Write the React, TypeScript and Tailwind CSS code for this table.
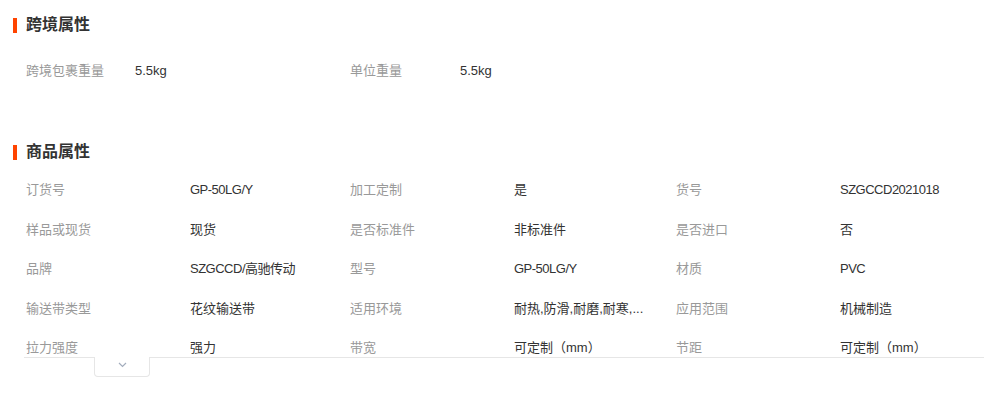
const font = { fontFamily: '"Liberation Sans", "Noto Sans CJK SC", sans-serif' };

type Attr = { label: string; value: string };

const cross: Attr[] = [
  { label: '跨境包裹重量', value: '5.5kg' },
  { label: '单位重量', value: '5.5kg' },
];

const attrs: Attr[][] = [
  [
    { label: '订货号', value: 'GP-50LG/Y' },
    { label: '加工定制', value: '是' },
    { label: '货号', value: 'SZGCCD2021018' },
  ],
  [
    { label: '样品或现货', value: '现货' },
    { label: '是否标准件', value: '非标准件' },
    { label: '是否进口', value: '否' },
  ],
  [
    { label: '品牌', value: 'SZGCCD/高驰传动' },
    { label: '型号', value: 'GP-50LG/Y' },
    { label: '材质', value: 'PVC' },
  ],
  [
    { label: '输送带类型', value: '花纹输送带' },
    { label: '适用环境', value: '耐热,防滑,耐磨,耐寒,...' },
    { label: '应用范围', value: '机械制造' },
  ],
  [
    { label: '拉力强度', value: '强力' },
    { label: '带宽', value: '可定制（mm）' },
    { label: '节距', value: '可定制（mm）' },
  ],
];

const colWidths = ['w-[324px]', 'w-[326px]', 'flex-1'];

function Title({ text }: { text: string }) {
  return (
    <div className="flex items-center h-[24px] pl-[13px]">
      <span className="w-[4px] h-[15px] bg-[#ff4400]" />
      <span className="ml-[9px] text-[16px] font-bold text-[#333]">{text}</span>
    </div>
  );
}

export default function App() {
  return (
    <div className="w-[984px] h-[400px] bg-white overflow-hidden" style={font}>
      <div className="mt-[13px]">
        <Title text="跨境属性" />
      </div>

      <div className="mt-[14px] flex h-[40px] items-center pl-[26px] text-[13px]">
        <div className="flex w-[324px]">
          <span className="w-[109px] text-[#999]">{cross[0].label}</span>
          <span className="text-[#333]">{cross[0].value}</span>
        </div>
        <div className="flex">
          <span className="w-[110px] text-[#999]">{cross[1].label}</span>
          <span className="text-[#333]">{cross[1].value}</span>
        </div>
      </div>

      <div className="mt-[49px]">
        <Title text="商品属性" />
      </div>

      <div className="mt-[6px] ml-[24px] h-[188px] overflow-hidden border-b border-[#e6e6e6]">
        {attrs.map((row, i) => (
          <div key={i} className="flex h-[39.5px] items-center pl-[2px] text-[13px]">
            {row.map((a, j) => (
              <div key={j} className={`flex ${colWidths[j]}`}>
                <span className="w-[164px] shrink-0 text-[#999]">{a.label}</span>
                <span
                  className={`text-[#333] whitespace-nowrap ${/[A-Z]/.test(a.value) ? 'tracking-[-0.5px]' : ''}`}
                >
                  {a.value}
                </span>
              </div>
            ))}
          </div>
        ))}
      </div>

      <div className="ml-[94px] -mt-px w-[56px] h-[20px] bg-white border border-t-0 border-[#e6e6e6] rounded-b-[4px] flex justify-center pt-[5px]">
        <svg width="9" height="6" viewBox="0 0 9 6" fill="none">
          <polyline points="1,1 4.5,4.5 8,1" stroke="#a3adbd" strokeWidth="1.2" />
        </svg>
      </div>
    </div>
  );
}
